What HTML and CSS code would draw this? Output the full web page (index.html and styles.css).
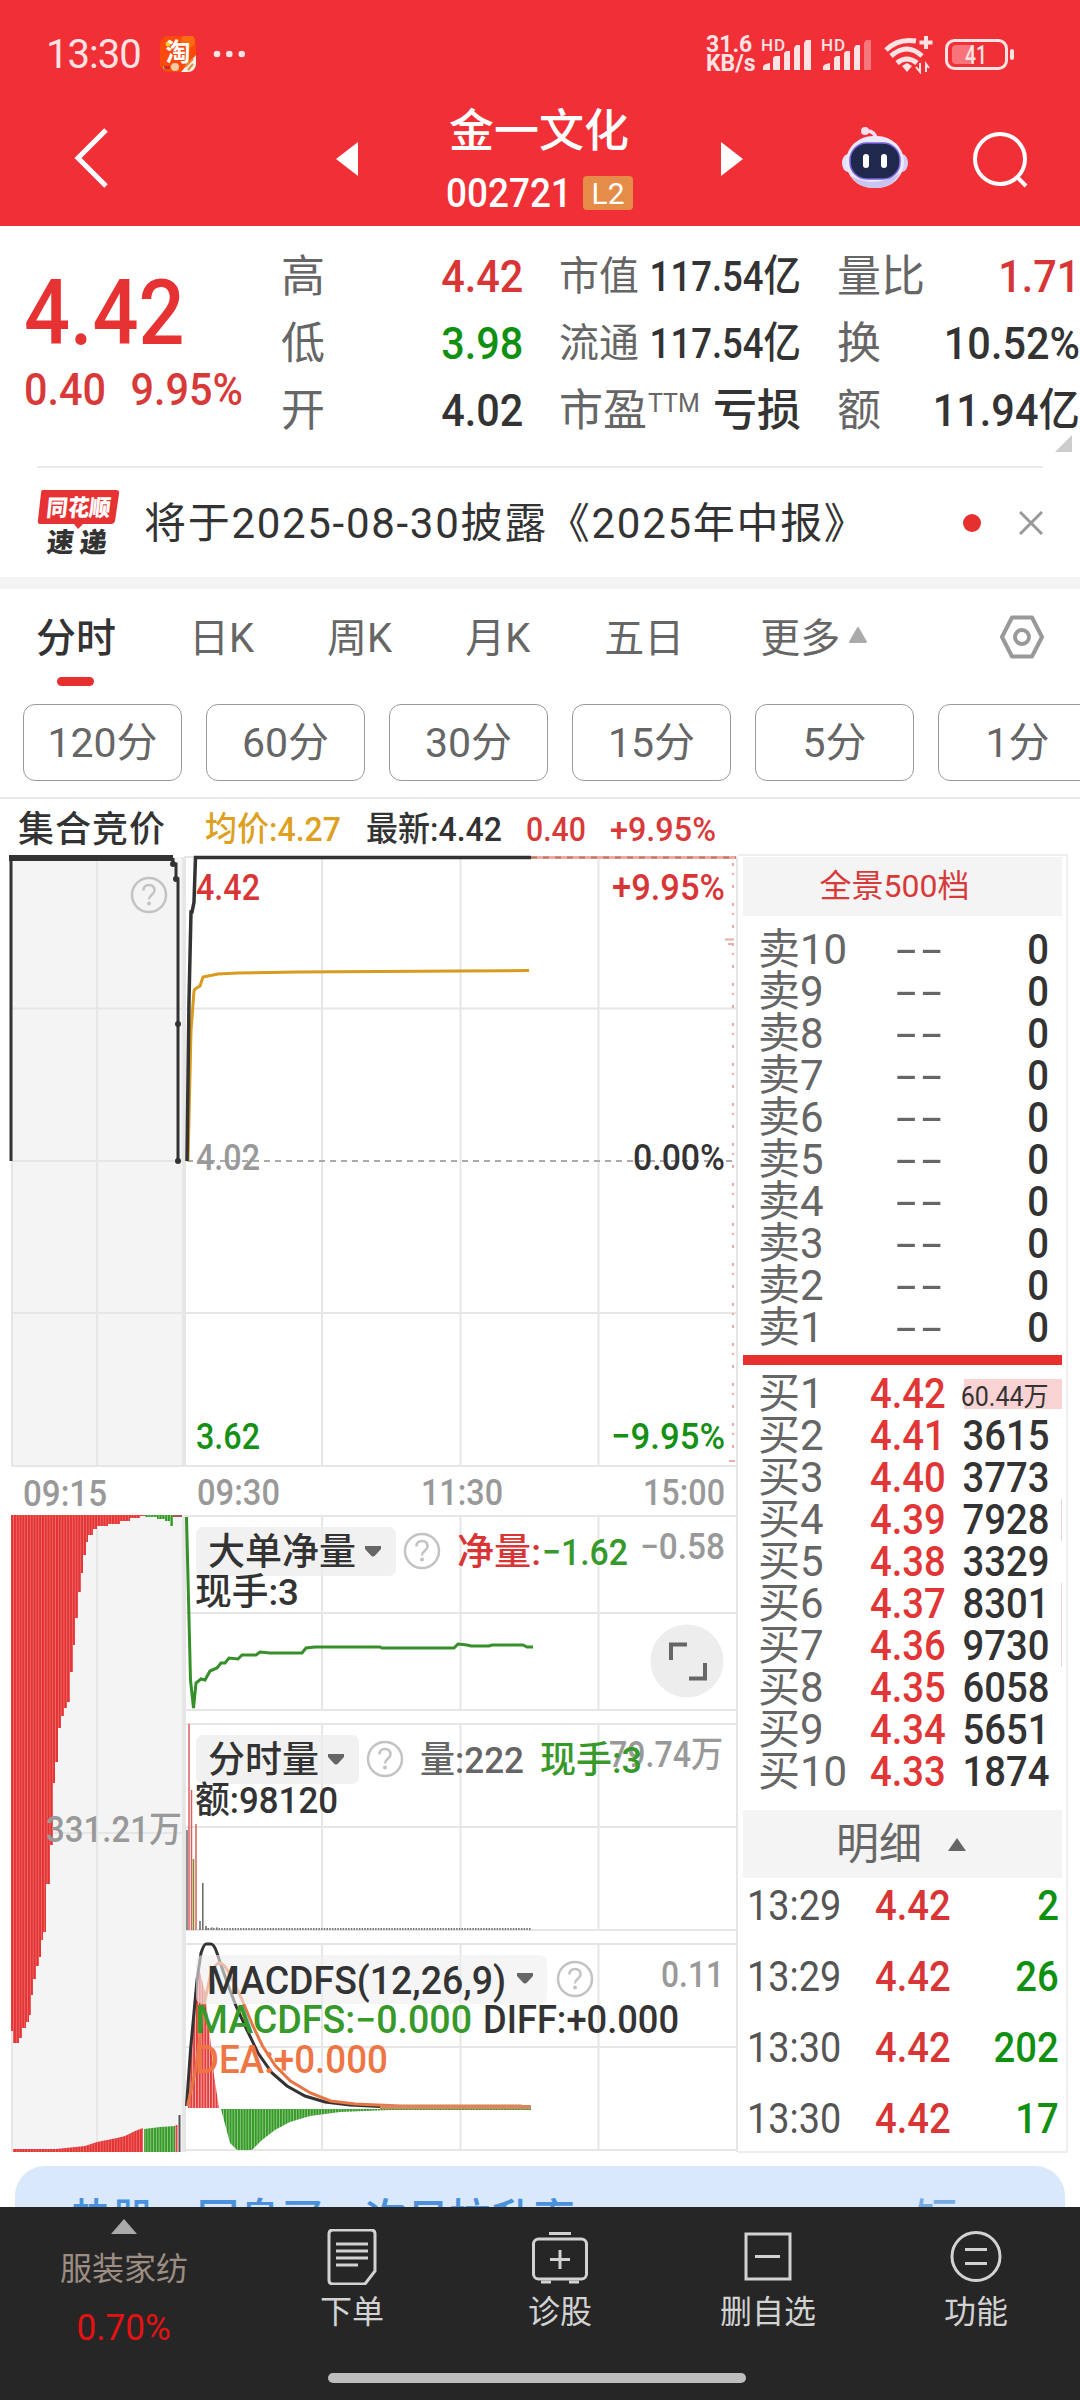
FILE: index.html
```html
<!DOCTYPE html>
<html lang="zh-CN">
<head>
    <meta charset="UTF-8">
    <meta name="viewport" content="width=device-width, initial-scale=1.0">
    <title>金一文化 002721</title>
    <link rel="stylesheet" href="styles.css">
</head>
<body>
    <header>
        <div class="status-bar">
            <span class="clock">13:30</span>
            <svg class="app-icon" width="36" height="36" viewBox="0 0 36 36">
                <rect width="36" height="36" rx="8" fill="#fb4a0c"/>
                <circle cx="28" cy="5" r="7" fill="#fc6a12"/>
                <circle cx="8" cy="8" r="2.5" fill="#ffc928"/>
                <path d="M36 19v9a8 8 0 0 1-8 8h-7z" fill="#f4efe8"/>
                <path d="M25 31l8-8M28 34l5-6" stroke="#e58a3c" stroke-width="2"/>
                <circle cx="15" cy="31" r="4" fill="#f6c9a4"/>
                <path d="M3 30h8a4.500 4.500 0 0 1-8 2z" fill="#8fd04a"/>
                <path d="M4 30h6a3 3 0 0 1-6 1z" fill="#d81e2c"/>
                <text x="18" y="25" text-anchor="middle" font-size="25" font-weight="700" fill="#fff">淘</text>
            </svg>
            <svg class="dots" width="32" height="8" viewBox="0 0 32 8" fill="#ffe3e4">
                <circle cx="4" cy="4" r="3.300"/><circle cx="16.300" cy="4" r="3.300"/><circle cx="28.800" cy="4" r="3.300"/>
            </svg>
            <div class="speed"><span>31.6</span><span>KB/s</span></div>
            <svg class="signals" width="260" height="40" viewBox="760 34 260 40">
                <g fill="#ffe3e4">
                    <text x="761" y="51" font-size="17" font-weight="500" textLength="24">HD</text>
                    <path d="M763 70v-3q0-3 7-4v7zM773 70V58l2-2h5v14zM784 70V53l2-2h4v19zM794 70V48l2-3h4v25zM804 70V43l2-3h5v30z"/>
                    <text x="821" y="51" font-size="17" font-weight="500" textLength="24">HD</text>
                    <path d="M823 70v-3q0-3 7-4v7zM834 70V58l2-2h4v14zM844 70V53l2-2h4v19zM854 70V48l2-3h4v25z"/>
                    <path d="M864 70V43l2-3h5v30z" opacity=".4"/>
                    <path d="M902 66l5-3 5 3-5 6z"/>
                    <path d="M926 36v13M919.500 42.500h13" stroke="#ffe3e4" stroke-width="4"/>
                    <path d="M920 63v9l-4-5M926 72v-8l3 4" stroke="#ffe3e4" stroke-width="2" fill="none"/>
                </g>
                <g fill="none" stroke="#ffe3e4" stroke-width="5">
                    <path d="M886 50q12-12 30-9"/>
                    <path d="M891 56q16-14 31 0"/>
                    <path d="M897 63q10-8 20 0"/>
                </g>
                <rect x="946.500" y="40.500" width="60" height="28" rx="8" fill="none" stroke="#ffe3e4" stroke-width="3"/>
                <path d="M956 45h16v19h-16q-4 0-4-4V49q0-4 4-4z" fill="#f8747a"/>
                <rect x="1010" y="49" width="4" height="11" rx="2" fill="#ffe3e4"/>
                <text x="965" y="63.500" font-size="25" font-weight="500" fill="#ffe3e4" textLength="22" lengthAdjust="spacingAndGlyphs">41</text>
            </svg>
        </div>
        <div class="title-bar">
            <svg class="back" width="36" height="62" viewBox="0 0 36 62" fill="none" stroke="#fff" stroke-width="5"><path d="M32 3L4 31l28 28"/></svg>
            <svg class="prev" width="22" height="34" viewBox="0 0 22 34" fill="#fff"><path d="M22 0v34L0 17z"/></svg>
            <div class="stock">
                <h1>金一文化</h1>
                <div class="code"><span class="code-num">002721</span><span class="badge">L2</span></div>
            </div>
            <svg class="next" width="22" height="34" viewBox="0 0 22 34" fill="#fff"><path d="M0 0v34l22-17z"/></svg>
            <svg class="robot" width="66" height="64" viewBox="0 0 66 64">
                <path d="M23 5q10-1 11 8" fill="none" stroke="#f3e0f2" stroke-width="3.500"/>
                <circle cx="23" cy="5" r="4" fill="#f6dff0"/>
                <ellipse cx="6" cy="37" rx="6" ry="9" fill="#e6e0fa"/>
                <ellipse cx="60" cy="37" rx="6" ry="9" fill="#d5cdf5"/>
                <rect x="4" y="10" width="58" height="52" rx="27" fill="#ece8fc"/>
                <path d="M9 50q24 13 49-3-7 15-25 15T9 50z" fill="#c9c4f0"/>
                <rect x="8" y="17" width="50" height="36" rx="17" fill="#20294d" stroke="#7a62e0" stroke-width="1.500"/>
                <rect x="21" y="28" width="6" height="14" rx="3" fill="#fff"/>
                <rect x="39" y="28" width="6" height="14" rx="3" fill="#fff"/>
            </svg>
            <svg class="search" width="58" height="58" viewBox="0 0 58 58" fill="none" stroke="#fff" stroke-width="4"><circle cx="28" cy="28" r="25"/><path d="M45 46l9 9"/></svg>
        </div>
    </header>

    <section class="quote">
        <div class="price">
            <div class="last">4.42</div>
            <div class="change"><span>0.40</span><span class="pct">9.95%</span></div>
        </div>
        <div class="col col-a">
            <div class="row"><span>高</span><b class="up">4.42</b></div>
            <div class="row"><span>低</span><b class="down">3.98</b></div>
            <div class="row"><span>开</span><b>4.02</b></div>
        </div>
        <div class="col col-b">
            <div class="row small"><span>市值</span><b>117.54<i>亿</i></b></div>
            <div class="row small"><span>流通</span><b>117.54<i>亿</i></b></div>
            <div class="row"><span>市盈<sup>TTM</sup></span><em>亏损</em></div>
        </div>
        <div class="col col-c">
            <div class="row"><span>量比</span><b class="up">1.71</b></div>
            <div class="row"><span>换</span><b>10.52%</b></div>
            <div class="row"><span>额</span><b>11.94<i>亿</i></b></div>
        </div>
        <div class="corner"></div>
    </section>

    <section class="news">
        <svg width="84" height="68" viewBox="36 488 84 68">
            <path d="M43 489h73q4 0 3 4l-4 27q-1 3-4 3H83l-5 5-4-5H41q-4 0-3-4l3-27q0-3 2-3z" fill="#e63232"/>
            <g transform="skewX(-6)" font-weight="900">
                <text x="100" y="515" font-size="23" fill="#fff" textLength="64" lengthAdjust="spacingAndGlyphs">同花顺</text>
                <text x="104" y="551" font-size="27" fill="#333" textLength="60">速递</text>
            </g>
        </svg>
        <span class="news-text">将于2025-08-30披露《2025年中报》</span>
        <span class="red-dot"></span>
        <svg class="close" width="24" height="24" viewBox="0 0 24 24" stroke="#999" stroke-width="3"><path d="M1 1l22 22M23 1L1 23"/></svg>
    </section>

    <nav class="tabs">
        <span class="active">分时</span>
        <span>日K</span>
        <span>周K</span>
        <span>月K</span>
        <span>五日</span>
        <span>更多</span>
        <svg class="more" width="20" height="18" viewBox="0 0 20 18"><path d="M10 2l8 14H2z" fill="#aaa" stroke="#aaa" stroke-width="2" stroke-linejoin="round"/></svg>
        <svg class="setting" width="44" height="44" viewBox="0 0 44 44" fill="none" stroke="#999" stroke-width="4" stroke-linejoin="round"><path d="M12 2.500h20L42 22 32 41.500H12L2 22z"/><circle cx="22" cy="22" r="7"/></svg>
    </nav>
    <div class="periods">
        <button>120分</button><button>60分</button><button>30分</button><button>15分</button><button>5分</button><button>1分</button>
    </div>

    <main>
        <svg class="charts" width="738" height="1360" viewBox="0 800 738 1360">
            <defs>
                <pattern id="red" width="2.800" height="10" patternUnits="userSpaceOnUse"><rect width="2.800" height="10" fill="#f27a7a"/><rect width="2.100" height="10" fill="#e33333"/></pattern>
                <pattern id="green" width="2.800" height="10" patternUnits="userSpaceOnUse"><rect width="2.800" height="10" fill="#9bd390"/><rect width="2" height="10" fill="#36992a"/></pattern>
                <pattern id="red-gap" width="2.800" height="10" patternUnits="userSpaceOnUse"><rect width="2.800" height="10" fill="#f8b4b4"/><rect width="1.900" height="10" fill="#e23c3c"/></pattern>
                <g id="help"><circle r="17" fill="none" stroke="#c3c3c3" stroke-width="2.500"/><path d="M-5.500-4.500q0-5.500 5.500-5.500t5.500 5.500c0 4-5.500 4-5.500 9" fill="none" stroke="#c3c3c3" stroke-width="2.500"/><circle cy="8.500" r="2" fill="#c3c3c3"/></g>
                <path id="drop" d="M0 0h16v3l-5.500 6q-2.500 3-5 0L0 3z" fill="#666"/>
            </defs>

            <!-- 行情摘要 -->
            <g font-weight="500" font-size="34">
                <text x="18" y="842" font-size="36" fill="#333" textLength="147">集合竞价</text>
                <text x="205" y="841" fill="#dda01f" textLength="136" lengthAdjust="spacingAndGlyphs">均价:4.27</text>
                <text x="366" y="841" fill="#333" textLength="136" lengthAdjust="spacingAndGlyphs">最新:4.42</text>
                <text x="526" y="841" fill="#d83a3a" textLength="60" lengthAdjust="spacingAndGlyphs">0.40</text>
                <text x="610" y="841" fill="#d83a3a" textLength="106" lengthAdjust="spacingAndGlyphs">+9.95%</text>
            </g>

            <!-- 网格 -->
            <path d="M12 857h172v609H12zM12 1516h172v636H12z" fill="#f4f4f4"/>
            <g fill="none" stroke="#e6e6e6" stroke-width="2">
                <path d="M97 857v609M12 1008.500h725M12 1161h172M12 1313h725M12 1466h725M97 1516v636M12 1833h172M12 1516v636M12 1161v305"/>
                <path d="M184 857h553M322 857v609M460.500 857v609M598.500 857v609M737 857v1295"/>
                <path d="M184 1516h553M184 1613h553M184 1710h553M322 1516v194M460.500 1516v194M598.500 1516v194"/>
                <path d="M184 1724h553M184 1827h553M184 1930h553M322 1724v206M460.500 1724v206M598.500 1724v206"/>
                <path d="M184 1944h553M184 2047h553M184 2150h553M322 1944v206M460.500 1944v206M598.500 1944v206"/>
            </g>
            <path d="M184 857v609M184 1516v636" stroke="#e6e6e6" stroke-width="4"/>
            <path d="M187 1161h550" stroke="#aaa" stroke-width="2" stroke-dasharray="6 5"/>

            <!-- 分时走势 -->
            <path d="M531 857.500h205" stroke="#eea9a9" stroke-width="3"/>
            <path d="M531 857.500h205" stroke="#b9785a" stroke-width="2" stroke-dasharray="6 6"/>
            <path d="M733 863v600" stroke="#ecaaaa" stroke-width="2" stroke-dasharray="3 7 2 10 3 15"/>
            <path d="M725 939.500h9M728 944h6M729 1461h6" stroke="#ecaaaa" stroke-width="2"/>
            <path d="M188 1161l3-130 3-40 1-2 5-3 3-9 15-3 20-1 60-1 160-1 71-.500" fill="none" stroke="#d99a20" stroke-width="3"/>
            <path d="M187 1161l2-161 2-88h1l2-10 1.500-44.500H531" fill="none" stroke="#333" stroke-width="3.500"/>
            <path d="M9 858h164" stroke="#333" stroke-width="6"/>
            <path d="M11 858v303M173 858v6h3v15h2v282" fill="none" stroke="#333" stroke-width="3"/>
            <g fill="#333"><circle cx="173" cy="864" r="3"/><circle cx="176" cy="879" r="3"/><circle cx="178" cy="1024" r="3"/><circle cx="178" cy="1161" r="3"/></g>
            <use href="#help" x="149" y="895"/>
            <g font-size="37" font-weight="500">
                <text x="196" y="900" fill="#d83636" textLength="64" lengthAdjust="spacingAndGlyphs">4.42</text>
                <text x="612" y="900" fill="#d83636" textLength="113" lengthAdjust="spacingAndGlyphs">+9.95%</text>
                <text x="196" y="1170" fill="#999" textLength="64" lengthAdjust="spacingAndGlyphs">4.02</text>
                <text x="633" y="1170" fill="#333" textLength="92" lengthAdjust="spacingAndGlyphs">0.00%</text>
                <text x="196" y="1449" fill="#149014" textLength="64" lengthAdjust="spacingAndGlyphs">3.62</text>
                <text x="611" y="1449" fill="#149014" textLength="114" lengthAdjust="spacingAndGlyphs">−9.95%</text>
            </g>
            <g font-size="36" fill="#999" font-weight="500">
                <text x="23" y="1506" textLength="84" lengthAdjust="spacingAndGlyphs">09:15</text>
                <text x="197" y="1505" textLength="83" lengthAdjust="spacingAndGlyphs">09:30</text>
                <text x="421" y="1505" textLength="82" lengthAdjust="spacingAndGlyphs">11:30</text>
                <text x="643" y="1505" textLength="82" lengthAdjust="spacingAndGlyphs">15:00</text>
            </g>

            <!-- 集合竞价量 -->
            <path d="M11 1515H145V1516H140V1518H130V1521H120V1524H108V1526H97V1529H93V1535H88V1542H86V1555H83V1573H81V1592H78V1618H75V1645H73V1672H70V1702H67V1708H64V1716H61V1728H58V1762H55V1783H53V1845H50V1884H46V1932H43V1940H41V1957H39V1966H36V1979H33V1995H31V2015H29V2022H26V2028H22V2038H19V2043H13V2031H11z" fill="url(#red)"/>
            <path d="M145 1515h28v11h-3v-5h-5v-2h-8v-2h-12z" fill="url(#green)"/>
            <path d="M173 1516h9" stroke="#a55" stroke-width="2"/>
            <path d="M13 2152v-3h43l29-3 12-4 20-4 8-2 10-5 8-3v24z" fill="url(#red)"/>
            <path d="M144 2152v-23l16-2 15-1v26z" fill="url(#green)"/>
            <path d="M176.500 2152v-27" stroke="#e04040" stroke-width="2"/>
            <path d="M179.500 2152v-37" stroke="#555" stroke-width="2"/>
            <text x="46" y="1842" font-size="36" font-weight="500" fill="#999" textLength="136" lengthAdjust="spacingAndGlyphs">331.21万</text>

            <!-- 大单净量 -->
            <path d="M186.500 1517l4 163 3 28 2.500-25 5-4 4 1 5-9 7-3 4-5h4l4-5 9 1 4-4h14l4-3 10 1h32l4-5 9-1h65l2 1h72l4-4 9 1 4 1h18l3-1h31l4 2h6" fill="none" stroke="#36902a" stroke-width="3"/>
            <rect x="196" y="1527" width="200" height="49" rx="7" fill="#eee" opacity=".8"/>
            <use href="#drop" x="365" y="1546"/>
            <use href="#help" x="422" y="1551"/>
            <g font-size="37" font-weight="500">
                <text x="208" y="1565" fill="#333" textLength="148">大单净量</text>
                <text x="457" y="1565" fill="#d83636" textLength="84" lengthAdjust="spacingAndGlyphs">净量:</text>
                <text x="542" y="1565" fill="#36992a" textLength="86" lengthAdjust="spacingAndGlyphs">−1.62</text>
                <text x="195" y="1605" fill="#333" textLength="104" lengthAdjust="spacingAndGlyphs">现手:3</text>
            </g>
            <text x="640" y="1559" font-size="36" font-weight="500" fill="#999" textLength="85" lengthAdjust="spacingAndGlyphs">−0.58</text>
            <circle cx="687" cy="1661" r="36.500" fill="#ededed"/>
            <path d="M671 1660v-15.500h16M705 1663v15.500h-16" fill="none" stroke="#666" stroke-width="4"/>

            <!-- 分时量 -->
            <path d="M189 1930v-206M191.500 1930v-140M196 1930v-106" stroke="#d86060" stroke-width="1.500"/>
            <path d="M187 1930v-100M200 1930v-9M202.800 1930v-47M206 1930v-4" stroke="#666" stroke-width="1.500"/>
            <path d="M193.500 1930v-71" stroke="#7a8a20" stroke-width="1.500"/>
            <path d="M205 1929h326" stroke="#777" stroke-width="2" stroke-dasharray="1.500 1.200"/>
            <path d="M208 1928v2M212 1927v3M217 1927v3" stroke="#777"/>
            <rect x="196" y="1735" width="163" height="49" rx="7" fill="#eee" opacity=".8"/>
            <use href="#drop" x="328" y="1754"/>
            <use href="#help" x="385" y="1759"/>
            <text x="609" y="1767" font-size="36" font-weight="500" fill="#999" textLength="114" lengthAdjust="spacingAndGlyphs">79.74万</text>
            <g font-size="37" font-weight="500">
                <text x="208" y="1773" fill="#333" textLength="111">分时量</text>
                <text x="420" y="1773" fill="#666" textLength="104" lengthAdjust="spacingAndGlyphs">量:222</text>
                <text x="540" y="1773" fill="#36992a" textLength="102" lengthAdjust="spacingAndGlyphs">现手:3</text>
                <text x="195" y="1813" fill="#333" textLength="143" lengthAdjust="spacingAndGlyphs">额:98120</text>
            </g>

            <!-- MACD -->
            <path d="M188 2108l3-58 3-50 3-27 3-1 5 20 5 45 4 38 5 33z" fill="url(#red-gap)"/>
            <path d="M221 2109l5 19 4 15 7 7h15l10-10 13-10 15-8 20-6 30-4 50-2h141v-1z" fill="url(#green)"/>
            <path d="M186.500 2106l4-56 6.500-70 4-27q3-9 5-9h5q3 0 6 9l4 12 7 20 8 21 11 24 11 23 14 20 15 13 18 10 20 6 25 3 40 2h141" fill="none" stroke="#333" stroke-width="3"/>
            <path d="M187.500 2106l8-36 8-63 7-32q5-12 9-12t9 9l12 24 12 29 10 21 13 20 15 15 20 12 20 8 25 3 45 2h121" fill="none" stroke="#e87545" stroke-width="3"/>
            <path d="M380 2107h151" stroke="#d88560" stroke-width="4"/>
            <rect x="196" y="1955" width="351" height="49" rx="7" fill="#eee" opacity=".6"/>
            <use href="#drop" x="517" y="1973"/>
            <use href="#help" x="575" y="1979"/>
            <text x="661" y="1987" font-size="36" font-weight="500" fill="#999" textLength="63" lengthAdjust="spacingAndGlyphs">0.11</text>
            <g font-size="38" font-weight="500">
                <text x="207" y="1994" fill="#333" textLength="299" lengthAdjust="spacingAndGlyphs">MACDFS(12,26,9)</text>
                <text x="195" y="2033" fill="#36992a" textLength="277" lengthAdjust="spacingAndGlyphs">MACDFS:−0.000</text>
                <text x="483" y="2033" fill="#333" textLength="196" lengthAdjust="spacingAndGlyphs">DIFF:+0.000</text>
                <text x="195" y="2073" fill="#ee7645" textLength="193" lengthAdjust="spacingAndGlyphs">DEA:+0.000</text>
            </g>
        </svg>

        <aside>
            <div class="book-title">全景500档</div>
            <div id="sell"></div>
            <div class="split"></div>
            <div id="buy"></div>
            <div class="detail-title">明细<i></i></div>
            <div id="ticks"></div>
        </aside>
    </main>

    <div class="banner"><span>热股、回息买，次日拉升率</span><span class="fade">短</span></div>

    <footer>
        <div class="sector">
            <i></i>
            <span>服装家纺</span>
            <strong>0.70%</strong>
        </div>
        <div class="tool">
            <svg viewBox="0 0 56 56"><path d="M9 1h38q4 0 4 4v37l-10 13H9q-4 0-4-4V5q0-4 4-4z"/><path d="M12 15h32M12 22h32M12 29h32M12 36h22"/></svg>
            <span>下单</span>
        </div>
        <div class="tool">
            <svg viewBox="0 0 56 56"><rect x="1.500" y="10" width="53" height="40" rx="5"/><path d="M17 4.500h22M28 21v19M18 30.500h20M9 53h10M37 53h10"/></svg>
            <span>诊股</span>
        </div>
        <div class="tool">
            <svg viewBox="0 0 56 56"><rect x="6" y="5" width="44" height="45"/><path d="M15 27.500h25"/></svg>
            <span>删自选</span>
        </div>
        <div class="tool">
            <svg viewBox="0 0 56 56"><circle cx="28" cy="27.500" r="24"/><path d="M17 20.500h22M17 34.500h22"/></svg>
            <span>功能</span>
        </div>
        <div class="home"></div>
    </footer>

    <script>
        const buyVolumes = ['60.44万', 3615, 3773, 7928, 3329, 8301, 9730, 6058, 5651, 1874];
        const ticks = [['13:29', 2], ['13:29', 26], ['13:30', 202], ['13:30', 17]];

        let sellHtml = '';
        for (let i = 10; i >= 1; i--) {
            sellHtml += `<div class="level"><span>卖${i}</span><u>--</u><b>0</b></div>`;
        }
        document.getElementById('sell').innerHTML = sellHtml;

        document.getElementById('buy').innerHTML = buyVolumes.map((vol, i) => {
            const price = (4.42 - i * 0.01).toFixed(2);
            let cls = i === 0 ? ' first' : '';
            if (vol > 7000) cls = ' mark';
            return `<div class="level${cls}"><span>买${i + 1}</span><em>${price}</em><b>${vol}</b></div>`;
        }).join('');

        document.getElementById('ticks').innerHTML = ticks.map(t =>
            `<div class="tick"><span>${t[0]}</span><em>4.42</em><b>${t[1]}</b></div>`
        ).join('');
    </script>
</body>
</html>
```
FILE: styles.css
```css
* {
    box-sizing: border-box;
}

body {
    margin: 0;
    width: 1080px;
    height: 2400px;
    overflow: hidden;
    background: #fff;
    color: #333;
    font-family: Roboto, "Noto Sans CJK SC", sans-serif;
    display: flex;
    flex-direction: column;
}

svg {
    display: block;
    flex: none;
}

i, em, u {
    font-style: normal;
    text-decoration: none;
}

/* 顶部 */
header {
    height: 226px;
    flex: none;
    background: #f12f37;
    color: #fff;
}

.status-bar {
    height: 108px;
    display: flex;
    align-items: center;
    padding-left: 46px;
    color: #ffe3e4;
}

.clock {
    font-size: 40px;
    width: 114px;
    letter-spacing: -1px;
}

.dots {
    margin-left: 17px;
}

.speed {
    margin-left: 461px;
    width: 54px;
    display: flex;
    flex-direction: column;
    font-size: 23px;
    line-height: 19px;
    font-weight: 700;
}

.title-bar {
    height: 118px;
    display: flex;
    align-items: flex-start;
}

.back {
    margin: 19px 0 0 74px;
}

.prev {
    margin: 34px 0 0 226px;
}

.stock {
    width: 363px;
    text-align: center;
}

h1 {
    margin: -4px 1px 0 0;
    font-size: 45px;
    line-height: 56px;
    font-weight: 500;
}

.code {
    display: flex;
    align-items: center;
    margin: 9px 0 0 88px;
}

.code-num {
    font-size: 41px;
    line-height: 48px;
    width: 137px;
    text-align: left;
    font-weight: 500;
    transform: scaleX(.9);
    transform-origin: left;
}

.badge {
    width: 50px;
    height: 34px;
    line-height: 35px;
    background: #e58d48;
    border-radius: 4px;
    font-size: 30px;
}

.next {
    margin-top: 34px;
}

.robot {
    margin: 18px 0 0 99px;
}

.search {
    margin: 23px 0 0 64px;
}

/* 报价 */
.quote {
    height: 242px;
    flex: none;
    display: flex;
    padding-top: 17px;
    position: relative;
}

.quote::after {
    content: "";
    position: absolute;
    left: 37px;
    right: 37px;
    bottom: 0;
    height: 2px;
    background: #ebebeb;
}

.price {
    width: 281px;
    padding-left: 24px;
    color: #e63232;
}

.last {
    margin-top: 16px;
    font-size: 90px;
    line-height: 110px;
    font-weight: 500;
    transform: scaleX(.9);
    transform-origin: left;
}

.change {
    font-size: 44px;
    line-height: 50px;
    margin-top: -4px;
    color: #d83a3a;
    font-weight: 500;
    white-space: nowrap;
    transform: scaleX(.94);
    transform-origin: left;
}

.pct {
    margin-left: 26px;
}

.col-a {
    width: 242px;
    margin-right: 36px;
}

.col-b {
    width: 242px;
    margin-right: 36px;
}

.col-c {
    width: 243px;
}

.row {
    height: 67px;
    display: flex;
    align-items: center;
    justify-content: space-between;
    white-space: nowrap;
    font-size: 44px;
    line-height: 60px;
    color: #666;
}

.row b {
    margin-left: -30px;
    font-size: 45px;
    font-weight: 500;
    color: #333;
    transform: scaleX(.92);
    transform-origin: right;
}

.row b i {
    font-size: 45px;
}

.row.small {
    font-size: 40px;
}

.row.small b {
    font-size: 42px;
    transform: scaleX(.87);
}

.row.small i {
    font-size: 43px;
}

.row em {
    font-weight: 500;
    color: #333;
}

.row sup {
    font-size: 25px;
    line-height: 0;
    vertical-align: 14px;
    margin-left: 1px;
}

.row .up {
    color: #d83636;
}

.row .down {
    color: #109010;
}

.corner {
    position: absolute;
    left: 1055px;
    top: 209px;
    border-left: 17px solid transparent;
    border-bottom: 17px solid #ccc;
}

/* 公告 */
.news {
    height: 121px;
    flex: none;
    display: flex;
    align-items: center;
    padding-left: 36px;
    border-bottom: 12px solid #f3f3f3;
}

.news-text {
    width: 819px;
    margin: -7px 0 0 24px;
    font-size: 42px;
    letter-spacing: 1.7px;
    white-space: nowrap;
}

.red-dot {
    width: 18px;
    height: 18px;
    border-radius: 50%;
    background: #e63030;
}

.close {
    margin-left: 38px;
}

/* 周期 */
.tabs {
    height: 115px;
    flex: none;
    padding: 0 0 23px 36px;
    display: flex;
    align-items: center;
    font-size: 40px;
    color: #666;
}

.tabs span {
    margin-right: 76px;
    position: relative;
}

.tabs span:nth-child(1) {
    margin-right: 73px;
}

.tabs span:nth-child(2),
.tabs span:nth-child(3) {
    margin-right: 73px;
}

.tabs span:nth-child(4) {
    margin-right: 74px;
}

.tabs span:nth-child(6) {
    margin-right: 8px;
}

.tabs .active {
    color: #333;
    font-weight: 500;
}

.tabs .active::after {
    content: "";
    position: absolute;
    left: 21px;
    bottom: -22px;
    width: 37px;
    height: 9px;
    border-radius: 5px;
    background: #e63030;
}

.setting {
    margin-left: 132px;
    position: relative;
    top: 2px;
}

.periods {
    height: 95px;
    flex: none;
    display: flex;
    gap: 24px;
    padding-left: 23px;
    border-bottom: 2px solid #e8e8e8;
    overflow: hidden;
}

.periods button {
    flex: none;
    width: 159px;
    height: 77px;
    padding: 0 0 8px;
    border: 1.5px solid #999;
    border-radius: 12px;
    background: #fff;
    color: #666;
    font-family: inherit;
    font-size: 41px;
}

/* 图表和盘口 */
main {
    height: 1360px;
    margin-top: 1px;
    flex: none;
    display: flex;
}

aside {
    width: 330px;
    height: 1299px;
    margin-top: 54px;
    padding: 1px 4px 0 5px;
    border: 2px solid #eee;
    border-left: none;
}

.book-title {
    height: 59px;
    line-height: 58px;
    background: #f4f4f4;
    color: #d83a3a;
    font-size: 32px;
    text-align: center;
    padding-right: 16px;
    margin-bottom: 13px;
}

.level {
    height: 42px;
    position: relative;
    display: grid;
    grid-template-columns: 112px 94px 1fr;
    align-items: center;
    padding: 0 13px 0 15px;
    font-size: 42px;
    line-height: 42px;
    white-space: nowrap;
    color: #666;
}

.level em, .level b, .tick em, .tick b {
    font-weight: 500;
    transform: scaleX(.91);
    transform-origin: left;
}

.level em {
    color: #e23535;
}

.level b {
    color: #333;
    justify-self: end;
    margin-left: -30px;
    transform-origin: right;
}

.level u {
    margin-left: 26px;
    letter-spacing: 3px;
    transform: scaleX(1.75);
    transform-origin: left;
}

.first::before {
    content: "";
    position: absolute;
    right: 0;
    top: 6px;
    width: 98px;
    height: 30px;
    background: #f9d3d4;
}

.first b {
    position: relative;
    top: 3px;
    font-size: 27.5px;
    font-weight: 400;
}

.mark {
    border-right: 1px solid #f0d5d8;
    padding-right: 12px;
}

.split {
    height: 10px;
    margin: 6px 0 8px;
    background: #e63030;
}

.detail-title {
    height: 68px;
    margin: 17px 0 -9px;
    background: #f4f4f4;
    color: #666;
    font-size: 43px;
    line-height: 66px;
    display: flex;
    align-items: center;
    padding-left: 93px;
}

.detail-title i {
    margin-left: 26px;
    border: 9px solid transparent;
    border-top: none;
    border-bottom: 13px solid #666;
}

.tick {
    height: 71px;
    display: grid;
    grid-template-columns: 128px 80px 1fr;
    align-items: center;
    padding: 2px 3px 0 4px;
    font-size: 42px;
    color: #555;
}

.tick span {
    transform: scaleX(.9);
    transform-origin: left;
}

.tick em {
    color: #d83636;
}

.tick b {
    color: #109010;
    justify-self: end;
    transform-origin: right;
}

/* 横幅 */
.banner {
    margin: 6px 15px 0;
    height: 41px;
    flex: none;
    overflow: hidden;
    border-radius: 30px 30px 0 0;
    background: #dae8fb;
    color: #4a90dc;
    font-size: 42px;
    line-height: 50px;
    padding: 29px 0 0 56px;
    display: flex;
    white-space: nowrap;
    font-weight: 500;
}

.banner .fade {
    margin-left: 340px;
    opacity: .7;
}

/* 底部工具栏 */
footer {
    height: 193px;
    flex: none;
    background: #262626;
    display: flex;
    position: relative;
    color: #d2d2d2;
    font-size: 32px;
    line-height: 40px;
}

.sector {
    width: 248px;
    display: flex;
    flex-direction: column;
    align-items: center;
    padding-top: 12px;
    color: #9c8d82;
}

.sector i {
    border: 13px solid transparent;
    border-top: none;
    border-bottom: 15px solid #aaa;
    margin-bottom: 15px;
}

.sector strong {
    margin-top: 19px;
    font-size: 37px;
    font-weight: 400;
    color: #e51212;
    transform: scaleX(.95);
}

.tool {
    width: 208px;
    display: flex;
    flex-direction: column;
    align-items: center;
    padding-top: 22px;
}

.tool svg {
    width: 56px;
    height: 56px;
    margin-bottom: 7px;
    fill: none;
    stroke: #d2d2d2;
    stroke-width: 3;
}

.home {
    position: absolute;
    left: 328px;
    bottom: 17px;
    width: 418px;
    height: 10px;
    border-radius: 5px;
    background: #bebebe;
}
```
